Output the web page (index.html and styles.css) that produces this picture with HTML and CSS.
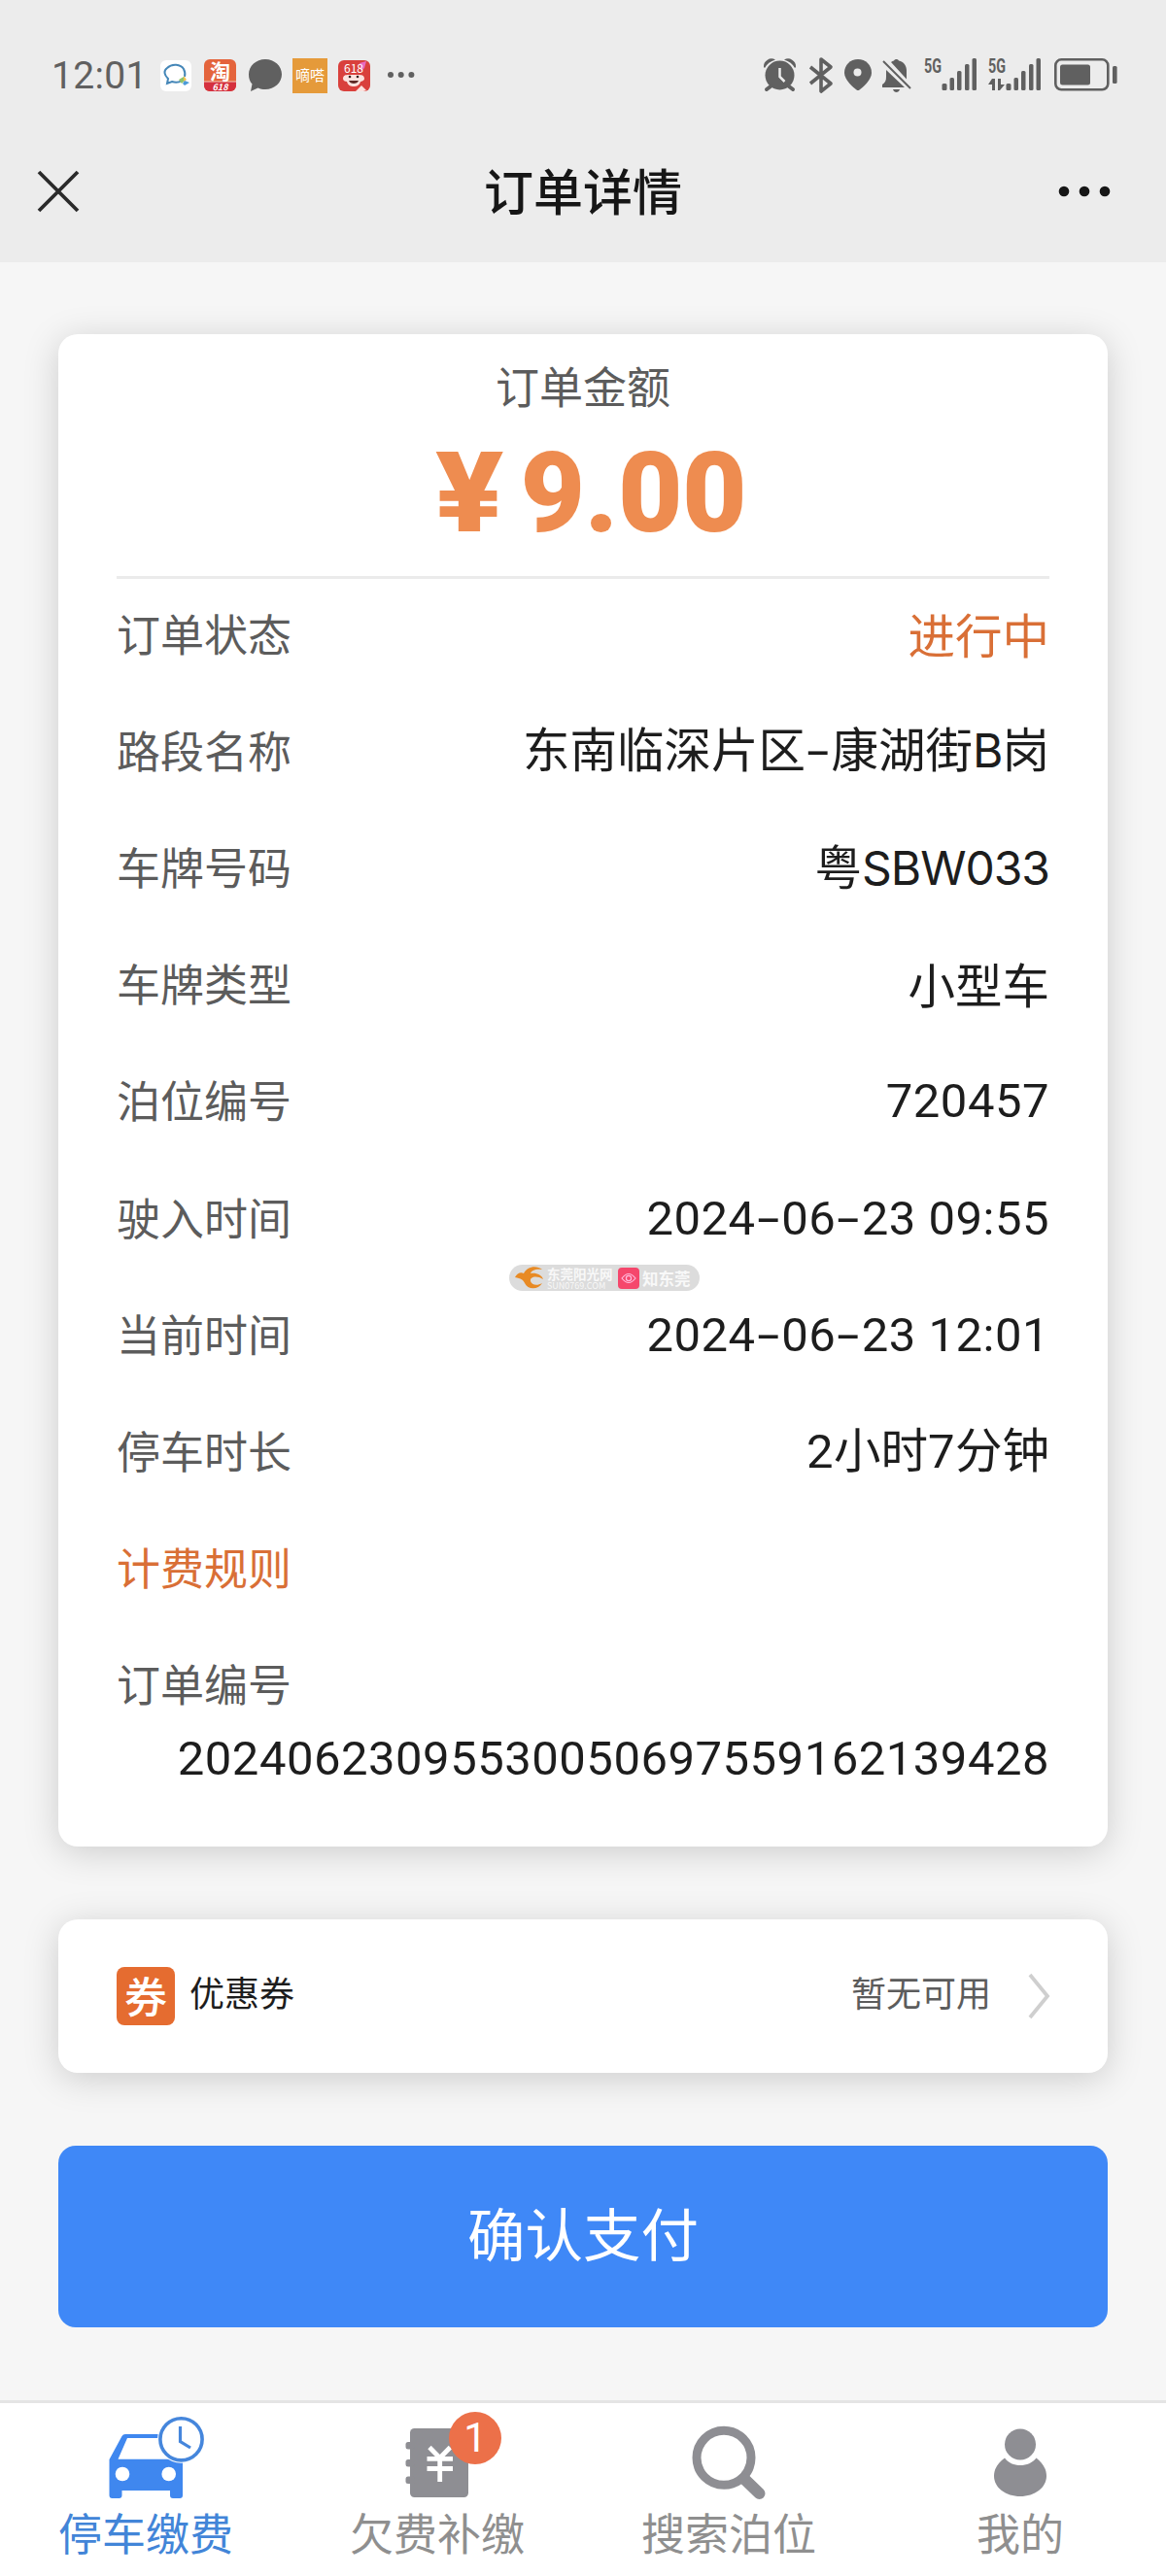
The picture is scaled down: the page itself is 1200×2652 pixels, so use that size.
FILE: index.html
```html
<!DOCTYPE html>
<html lang="zh-CN">
<head>
  <meta charset="UTF-8">
  <meta name="viewport" content="width=device-width, initial-scale=1.0">
  <title>订单详情</title>
  <link rel="stylesheet" href="styles.css">
</head>
<body>
  <header class="header">
    <div class="status-bar">
      <span class="clock">12:01</span>
      <div class="status-left">
        <svg width="34" height="40" viewBox="0 0 34 40">
          <rect x="0" y="4" width="32" height="32" rx="6" fill="#fff"/>
          <path d="M22 25c-3 2-7 2-10 1l-5 2 1-5c-4-4-5-8-1-11 5-5 14-4 17 1 1 2 2 5 1 8" fill="none" stroke="#4587b8" stroke-width="2"/>
          <path d="M19 24l5-3 1 4-3 3z" fill="#8fc46b"/>
          <path d="M24 20l3 4-3 2z" fill="#f2c14b"/>
          <path d="M25 25l5 2-5 3-2-2z" fill="#4b9ad8"/>
        </svg>
        <svg width="34" height="40" viewBox="0 0 34 40">
          <rect x="0" y="3" width="33" height="33" rx="6" fill="#e4643c"/>
          <path d="M0 26h33v4a6 6 0 0 1-6 6H6a6 6 0 0 1-6-6z" fill="#d5303e"/>
          <path d="M0 26h33" stroke="#f6cdbb" stroke-width="1"/>
          <text class="app-text" x="16.500" y="23" font-size="21">淘</text>
          <text class="app-text app-618" x="16.500" y="35" font-size="9">618</text>
        </svg>
        <svg width="35" height="40" viewBox="0 0 35 40">
          <path d="M18 3c9.500 0 17 7 17 15.500S27.500 34 18 34c-3 0-5-.5-7.500-1.600L3 36l1.500-7.500C2 26 1 22.500 1 18.500 1 10 8.500 3 18 3z" fill="#606060"/>
        </svg>
        <svg width="36" height="40" viewBox="0 0 36 40">
          <rect x="0" y="2" width="36" height="36" fill="#e59a3a"/>
          <text class="app-text app-thin" x="18" y="25" font-size="15">嘀嗒</text>
        </svg>
        <svg width="33" height="40" viewBox="0 0 33 40">
          <rect x="0" y="4" width="33" height="32" rx="6" fill="#d9403c"/>
          <path d="M22 7l7-2-2 7-3 3z" fill="#e86bc0"/>
          <text class="app-text app-thin" x="16" y="17" font-size="12">618</text>
          <path d="M5 23c0-5 5-4 11-4s11-1 11 4c0 2-3 3-4 3-1 4-4 5-7 5s-6-1-7-5c-2 0-4-1-4-3z" fill="#fbe3df"/>
          <circle cx="12" cy="21" r="1.300" fill="#33201f"/>
          <circle cx="20" cy="21" r="1.300" fill="#33201f"/>
          <path d="M11 25h10c-1 4-9 4-10 0z" fill="#5e2a26"/>
          <path d="M18 36l6-6 5 5-3 1z" fill="#fbe3df"/>
        </svg>
        <svg width="40" height="40" viewBox="0 0 40 40" fill="#606060">
          <circle cx="10" cy="19" r="3"/>
          <circle cx="20.700" cy="19" r="3"/>
          <circle cx="31.400" cy="19" r="3"/>
        </svg>
      </div>
      <div class="status-right">
        <svg width="37" height="40" viewBox="0 0 37 40" fill="#606060">
          <circle cx="16.500" cy="19.500" r="15"/>
          <path d="M0 11a8 8 0 0 1 12-7.500C7 5 3 8 1 12zM33 11a8 8 0 0 0-12-7.500C26 5 30 8 32 12z"/>
          <path d="M7 31l-4 3M26 31l4 3" stroke="#606060" stroke-width="4" stroke-linecap="round"/>
          <path d="M16.500 12v9l5 5" fill="none" stroke="#ececec" stroke-width="2.500"/>
        </svg>
        <svg width="26" height="40" viewBox="0 0 26 40" fill="none" stroke="#606060" stroke-width="3.600" stroke-linejoin="round">
          <path d="M1 11l21 17-10 8V3l10 8L1 28"/>
        </svg>
        <svg width="28" height="40" viewBox="0 0 28 40">
          <path d="M14 3c8 0 14 6 14 14 0 7-9 15-12.500 17.500q-1.500 1-3 0C9 32 0 24 0 17 0 9 6 3 14 3z" fill="#606060"/>
          <circle cx="13.500" cy="16.500" r="4" fill="#ececec"/>
        </svg>
        <svg width="34" height="40" viewBox="0 0 34 40" fill="#606060">
          <path d="M10 6c1-1 2-1 3-1.500 1-2 4-2 5 0 5 1 8 5 8 10v9zM5 14l19 18H1v-3c3-2 4-4 4-8z"/>
          <path d="M12 34h7c-1 4-6 4-7 0z"/>
          <path d="M2 5l28 28" stroke="#606060" stroke-width="2"/>
        </svg>
        <svg width="55" height="40" viewBox="0 0 55 40" fill="#606060">
          <text class="net" x="0" y="17" textLength="18" lengthAdjust="spacingAndGlyphs">5G</text>
          <rect x="18.500" y="28" width="5" height="7" rx="1.500"/>
          <rect x="26.500" y="22" width="4.500" height="13" rx="1.500"/>
          <rect x="34" y="15" width="4.500" height="20" rx="1.500"/>
          <rect x="42" y="8" width="4.500" height="27" rx="1.500"/>
          <rect x="49.500" y="2" width="4.500" height="33" rx="1.500"/>
        </svg>
        <svg width="59" height="40" viewBox="0 0 59 40" fill="#606060">
          <text class="net" x="1" y="17" textLength="18" lengthAdjust="spacingAndGlyphs">5G</text>
          <path d="M5 23h3v12H5v-6H1zM11 23h3v6h4l-5 6h-2z"/>
          <rect x="19.500" y="28" width="5" height="7" rx="1.500"/>
          <rect x="27.500" y="22" width="4.500" height="13" rx="1.500"/>
          <rect x="35" y="15" width="4.500" height="20" rx="1.500"/>
          <rect x="43" y="8" width="4.500" height="27" rx="1.500"/>
          <rect x="50.500" y="2" width="4.500" height="33" rx="1.500"/>
        </svg>
        <svg width="66" height="40" viewBox="0 0 66 40" fill="#606060">
          <rect x="1.300" y="3.300" width="54" height="31" rx="6" fill="none" stroke="#606060" stroke-width="2.600"/>
          <rect x="6" y="8.500" width="31" height="21" rx="2.500"/>
          <rect x="60" y="10" width="4.600" height="18" rx="1.500"/>
        </svg>
      </div>
    </div>
    <div class="nav-bar">
      <svg class="nav-icon" width="60" height="60" viewBox="0 0 60 60" fill="none" stroke="#2a2a2a" stroke-width="3.800">
        <path d="M10 10l40 40M50 10L10 50"/>
      </svg>
      <h1 class="nav-title">订单详情</h1>
      <svg class="nav-icon" width="60" height="60" viewBox="0 0 60 60" fill="#161616">
        <circle cx="9" cy="30" r="5.300"/>
        <circle cx="30" cy="30" r="5.300"/>
        <circle cx="51" cy="30" r="5.300"/>
      </svg>
    </div>
  </header>

  <main class="content">
    <section class="card order">
      <div class="amount">
        <p class="amount-label">订单金额</p>
        <p class="amount-value"><span class="yen">¥</span>9.00</p>
      </div>
      <div class="row"><span class="label">订单状态</span><span class="value orange">进行中</span></div>
      <div class="row"><span class="label">路段名称</span><span class="value">东南临深片区<span class="num"><i>-</i></span>康湖街<span class="plate">B</span>岗</span></div>
      <div class="row"><span class="label">车牌号码</span><span class="value">粤<span class="plate">SBW033</span></span></div>
      <div class="row"><span class="label">车牌类型</span><span class="value">小型车</span></div>
      <div class="row"><span class="label">泊位编号</span><span class="value num">720457</span></div>
      <div class="row"><span class="label">驶入时间</span><span class="value num">2024<i>-</i>06<i>-</i>23 09:55</span></div>
      <div class="row"><span class="label">当前时间</span><span class="value num">2024<i>-</i>06<i>-</i>23 12:01</span></div>
      <div class="row"><span class="label">停车时长</span><span class="value"><span class="num">2</span>小时<span class="num">7</span>分钟</span></div>
      <div class="row"><span class="label orange">计费规则</span></div>
      <div class="row"><span class="label">订单编号</span></div>
      <p class="order-no num">20240623095530050697559162139428</p>

      <div class="watermark">
        <svg width="32" height="28" viewBox="0 0 32 28">
          <path d="M0 13c2-4 6-6 9-4 3-7 13-9 19-4-7-1-11 1-12 4 6-1 12 2 13 6-6-4-14-3-13 2 1 4 7 5 12 2-4 7-15 7-18 0-1-3-4-5-10-6z" fill="#e88a24"/>
        </svg>
        <span class="wm-name"><b>东莞阳光网</b><small>SUN0769.COM</small></span>
        <svg width="22" height="24" viewBox="0 0 22 24">
          <rect x="0" y="1" width="22" height="22" rx="4" fill="#f5476c"/>
          <path d="M4 12q7-9 14 0-7 9-14 0z" fill="none" stroke="#fbd" stroke-width="1.200"/>
          <circle cx="11" cy="12" r="2.600" fill="none" stroke="#fbd" stroke-width="1.200"/>
        </svg>
        <b class="wm-app">知东莞</b>
      </div>
    </section>

    <section class="card coupon">
      <span class="coupon-icon">券</span>
      <span class="coupon-title">优惠券</span>
      <span class="coupon-state">暂无可用</span>
      <svg width="24" height="48" viewBox="0 0 24 48" fill="none" stroke="#cfcfcf" stroke-width="3.800">
        <path d="M2 2l18 22L2 46"/>
      </svg>
    </section>

    <button class="pay">确认支付</button>
  </main>

  <nav class="tab-bar">
    <a class="tab active">
      <svg width="300" height="107" viewBox="0 0 300 107">
        <path fill-rule="evenodd" fill="#3f87ef" d="M129 32H170V36H131L121.500 57.700H176L188 61V95q0 3-3 3H178q-3 0-3-3V90H125.500V95q0 3-3 3H115.500q-3 0-3-3V58L125.500 34Q126.500 32 129 32z"/>
        <circle cx="126" cy="73" r="7.300" fill="#fff"/>
        <circle cx="173.700" cy="73" r="7.300" fill="#fff"/>
        <circle cx="186.500" cy="37.300" r="22.500" fill="#fff" stroke="#fff" stroke-width="4"/>
        <circle cx="186.500" cy="37.300" r="21.600" fill="#fff" stroke="#4586dc" stroke-width="3.600"/>
        <path d="M185.500 24v15.500l10.500 6.500" fill="none" stroke="#4586dc" stroke-width="3.200"/>
      </svg>
      <span>停车缴费</span>
    </a>
    <a class="tab">
      <svg width="300" height="107" viewBox="0 0 300 107">
        <rect x="122" y="26" width="60" height="71" rx="4.500" fill="#8e8e93"/>
        <rect x="117.500" y="40" width="9" height="7.500" rx="2.500" fill="#8e8e93"/>
        <rect x="117.500" y="58" width="9" height="7.500" rx="2.500" fill="#8e8e93"/>
        <rect x="117.500" y="75.500" width="9" height="7.500" rx="2.500" fill="#8e8e93"/>
        <path d="M142 45.500l10.700 11 10.700-11M152.700 56v25M139.500 57.300h26.500M139.500 67.500h26.500" fill="none" stroke="#fff" stroke-width="4.800"/>
      </svg>
      <em class="badge">1</em>
      <span>欠费补缴</span>
    </a>
    <a class="tab">
      <svg width="300" height="107" viewBox="0 0 300 107" fill="none" stroke="#8e8e93">
        <circle cx="145" cy="56.300" r="28" stroke-width="9"/>
        <path d="M166 78l15.500 15" stroke-width="12" stroke-linecap="round"/>
      </svg>
      <span>搜索泊位</span>
    </a>
    <a class="tab">
      <svg width="300" height="107" viewBox="0 0 300 107" fill="#8e8e93">
        <circle cx="150" cy="42.500" r="16"/>
        <path d="M134 56.500c7 10 25 10 32.500 0 6 4.500 10.500 11 10.500 18.500 0 12-12 21-27 21s-27-9-27-21c0-7.500 4.500-14 11-18.500z"/>
      </svg>
      <span>我的</span>
    </a>
  </nav>
</body>
</html>
```
FILE: styles.css
```css
* {
  margin: 0;
  padding: 0;
  box-sizing: border-box;
}

body {
  width: 1200px;
  height: 2652px;
  display: flex;
  flex-direction: column;
  background-color: #f6f6f6;
  font-family: "Noto Sans CJK SC", sans-serif;
  color: #1d1d1d;
}

svg {
  display: block;
  flex-shrink: 0;
  overflow: visible;
}

/* header */
.header {
  height: 270px;
  background-color: #ececec;
}

.status-bar {
  height: 118px;
  padding: 38px 49px 0 53px;
  display: flex;
  align-items: center;
}

.clock {
  width: 112px;
  font-family: Roboto, sans-serif;
  font-size: 39px;
  line-height: 40px;
  letter-spacing: 0.3px;
  color: #606060;
}

.status-left {
  display: flex;
  gap: 11px;
}

.status-right {
  display: flex;
  gap: 10px;
  margin-left: auto;
}

.app-text {
  fill: #fff;
  font-weight: bold;
  text-anchor: middle;
}

.app-618 {
  font-style: italic;
}

.app-thin {
  font-weight: normal;
}

.net {
  font-family: Roboto, sans-serif;
  font-size: 20px;
  font-weight: bold;
}

.nav-bar {
  height: 152px;
  padding: 4px 54px 0 30px;
  display: flex;
  align-items: flex-start;
  justify-content: space-between;
}

.nav-icon {
  margin-top: 45px;
}

.nav-title {
  margin-left: 24px;
  font-size: 51px;
  font-weight: 500;
  line-height: 146px;
  height: 148px;
  color: #161616;
}

/* cards */
.content {
  height: 2201px;
  padding: 74px 60px 0;
}

.card {
  background-color: #fff;
  border-radius: 20px;
  box-shadow: 0 6px 36px rgba(0, 0, 0, 0.17);
}

.order {
  position: relative;
  height: 1557px;
  padding: 0 60px;
}

.amount {
  height: 252px;
  padding-top: 20px;
  border-bottom: 3px solid #ebebeb;
  text-align: center;
}

.amount-label {
  font-size: 45px;
  line-height: 66px;
  color: #5c5c5c;
}

.amount-value {
  padding-left: 20px;
  font-family: Roboto, sans-serif;
  font-size: 115px;
  font-weight: 900;
  line-height: 156px;
  letter-spacing: -0.5px;
  color: #ee8c50;
}

.yen {
  display: inline-block;
  margin-right: 22px;
  transform: scaleX(1.13);
}

.row {
  height: 120.2px;
  padding-bottom: 9px;
  display: flex;
  align-items: center;
  justify-content: space-between;
}

.label {
  font-size: 45px;
  line-height: 60px;
  color: #5c5c5c;
}

.value {
  font-size: 48.5px;
  line-height: 60px;
}

.label.orange,
.value.orange {
  color: #d96f36;
}

.num {
  font-family: Roboto, sans-serif;
  font-size: 49px;
  letter-spacing: 0.5px;
}

.value.num {
  padding-top: 4px;
}

/* wide hyphen between date parts */
.num i {
  display: inline-block;
  width: 26.5px;
  font-style: normal;
  text-align: center;
  transform: scaleX(1.7);
}

.plate {
  font-family: Inter, sans-serif;
  font-size: 48px;
  letter-spacing: -1px;
}

.order-no {
  margin-top: -17px;
  line-height: 60px;
  text-align: right;
}

.watermark {
  position: absolute;
  left: 464px;
  top: 958px;
  width: 196px;
  height: 27px;
  padding-left: 6px;
  display: flex;
  align-items: center;
  border-radius: 14px;
  background-color: #dcdcdc;
  color: #f8f8f8;
}

.wm-name {
  width: 73px;
  margin-left: 1px;
  display: flex;
  flex-direction: column;
}

.wm-name b {
  font-size: 13.5px;
  line-height: 15px;
}

.wm-name small {
  font-size: 9px;
  line-height: 9px;
}

.wm-app {
  margin-left: 3px;
  font-size: 16.5px;
  line-height: 24px;
}

.coupon {
  height: 158px;
  margin-top: 75px;
  padding: 0 58px 0 60px;
  display: flex;
  align-items: center;
}

.coupon-icon {
  width: 60px;
  height: 60px;
  border-radius: 8px;
  background-color: #e56c30;
  color: #fff;
  font-size: 44px;
  font-weight: 500;
  line-height: 58px;
  text-align: center;
}

.coupon-title {
  margin-left: 15px;
  font-size: 36px;
  line-height: 50px;
  padding-bottom: 10px;
}

.coupon-state {
  margin-left: auto;
  margin-right: 38px;
  padding-bottom: 10px;
  font-size: 36px;
  line-height: 50px;
  color: #5c5c5c;
}

.pay {
  display: block;
  width: 1080px;
  height: 187px;
  margin-top: 75px;
  padding-bottom: 11px;
  border: none;
  border-radius: 18px;
  background-color: #3f88f7;
  color: #fff;
  font-family: inherit;
  font-size: 59.5px;
}

/* bottom tabs */
.tab-bar {
  height: 181px;
  display: flex;
  border-top: 3px solid #e4e4e4;
  background-color: #fff;
}

.tab {
  position: relative;
  width: 300px;
  text-align: center;
  font-size: 45px;
  line-height: 51px;
  color: #8f8f8f;
}

.active {
  color: #4285d8;
}

.badge {
  position: absolute;
  left: 162px;
  top: 9px;
  width: 54px;
  height: 54px;
  border-radius: 50%;
  background-color: #ec7049;
  color: #fff;
  font-family: Roboto, sans-serif;
  font-size: 42px;
  font-style: normal;
  line-height: 54px;
}
```
